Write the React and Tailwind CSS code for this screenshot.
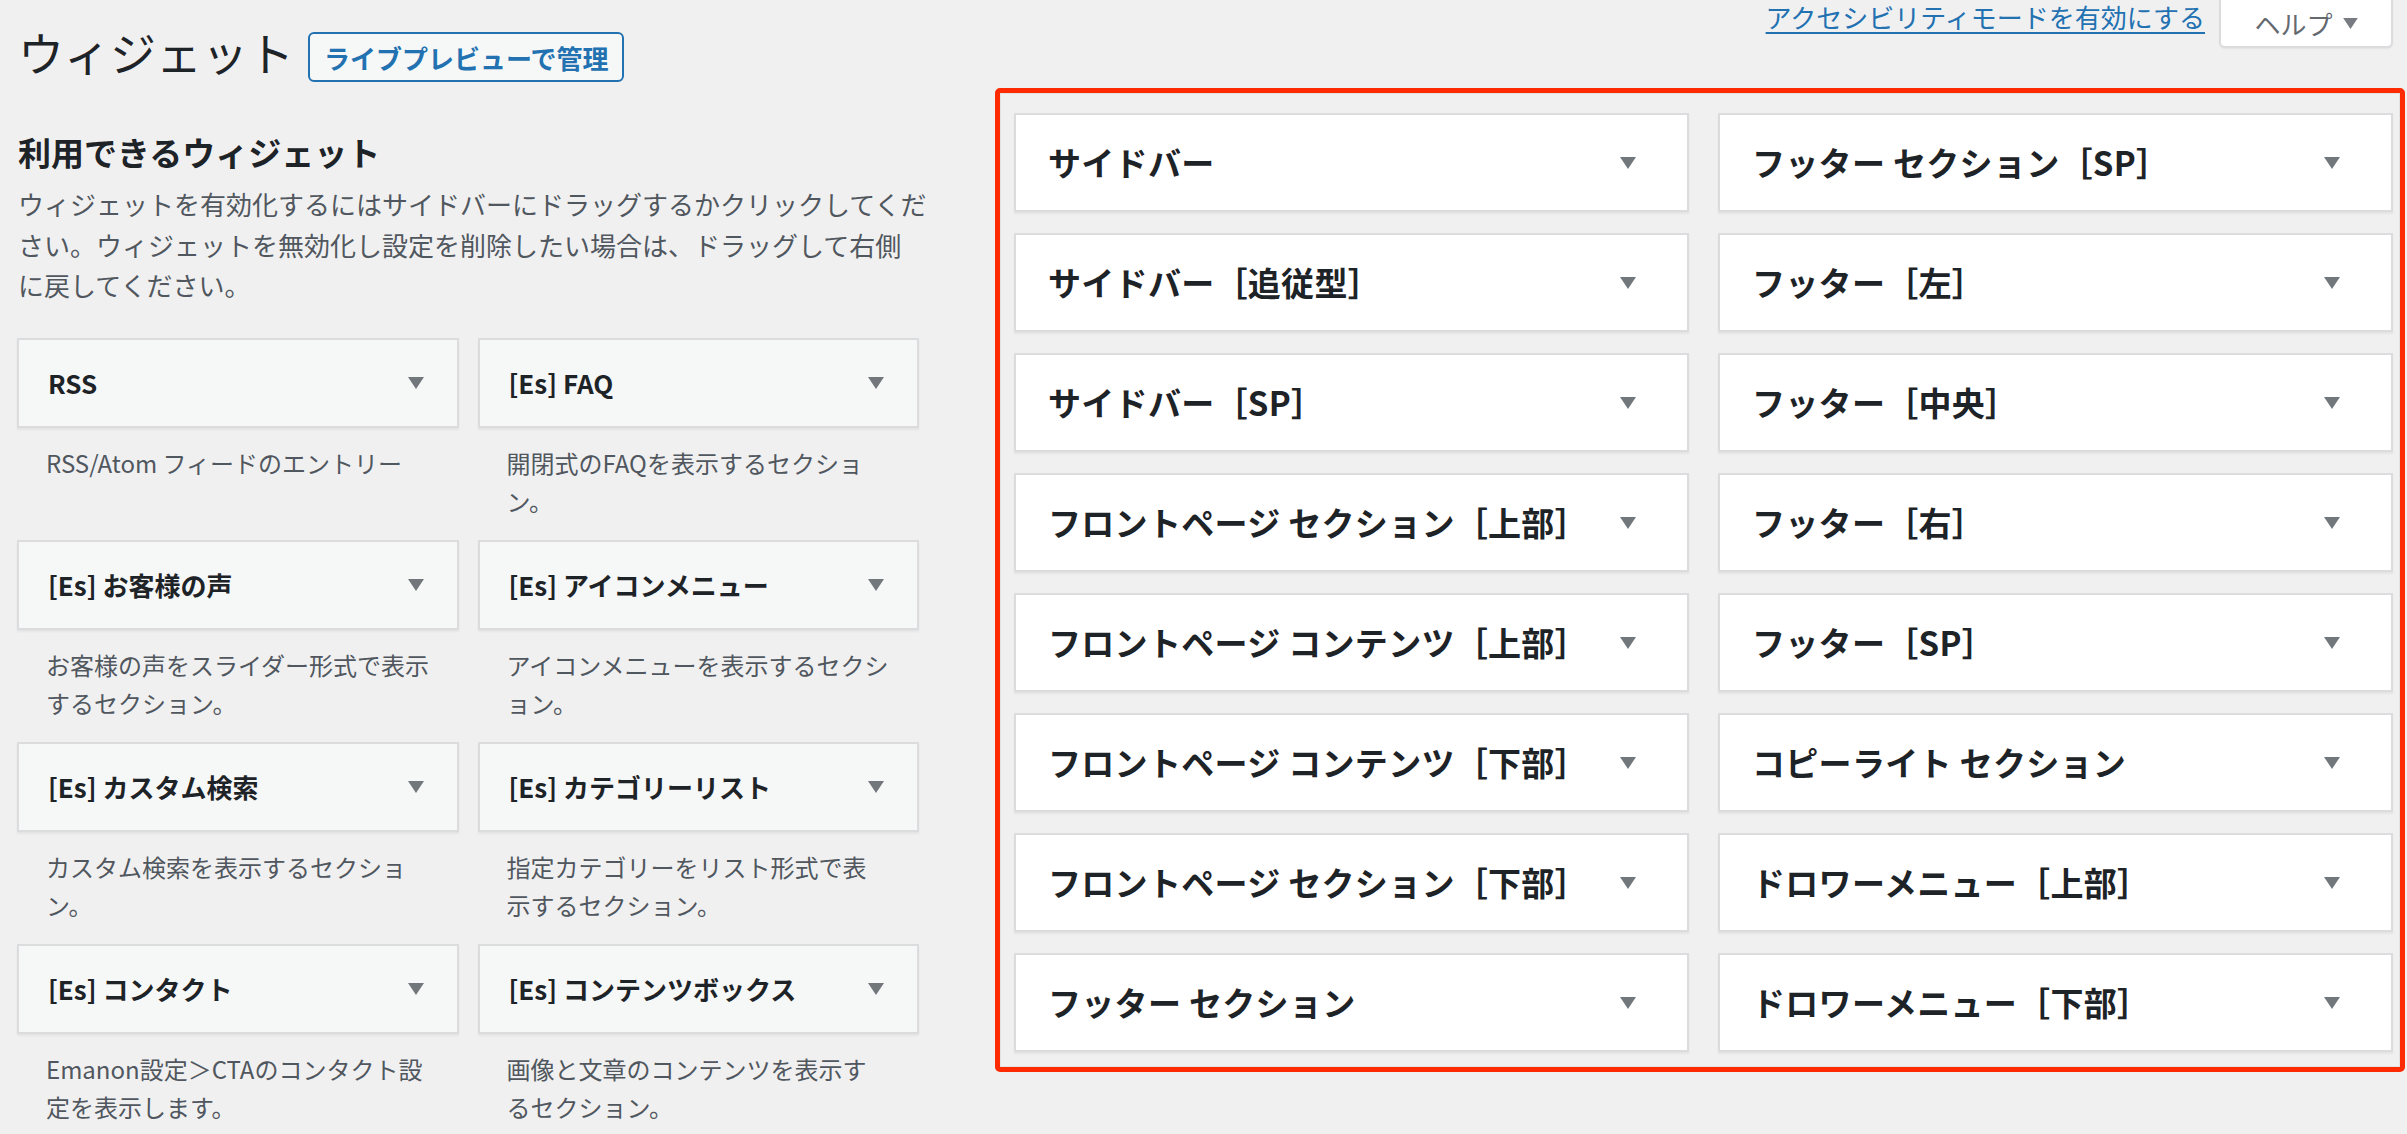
import React from 'react';

const availableWidgets = [
  { title: 'RSS', desc: ['RSS/Atom フィードのエントリー'] },
  { title: '[Es] FAQ', desc: ['開閉式のFAQを表示するセクショ', 'ン。'] },
  { title: '[Es] お客様の声', desc: ['お客様の声をスライダー形式で表示', 'するセクション。'] },
  { title: '[Es] アイコンメニュー', desc: ['アイコンメニューを表示するセクシ', 'ョン。'] },
  { title: '[Es] カスタム検索', desc: ['カスタム検索を表示するセクショ', 'ン。'] },
  { title: '[Es] カテゴリーリスト', desc: ['指定カテゴリーをリスト形式で表', '示するセクション。'] },
  { title: '[Es] コンタクト', desc: ['Emanon設定＞CTAのコンタクト設', '定を表示します。'] },
  { title: '[Es] コンテンツボックス', desc: ['画像と文章のコンテンツを表示す', 'るセクション。'] },
];

const sidebars = [
  'サイドバー',
  'フッター セクション［SP］',
  'サイドバー［追従型］',
  'フッター［左］',
  'サイドバー［SP］',
  'フッター［中央］',
  'フロントページ セクション［上部］',
  'フッター［右］',
  'フロントページ コンテンツ［上部］',
  'フッター［SP］',
  'フロントページ コンテンツ［下部］',
  'コピーライト セクション',
  'フロントページ セクション［下部］',
  'ドロワーメニュー［上部］',
  'フッター セクション',
  'ドロワーメニュー［下部］',
];

function Caret({ className }) {
  return (
    <svg viewBox="0 0 16 12" className={className} aria-hidden="true">
      <path d="M0 0h16L8 12z" fill="currentColor" />
    </svg>
  );
}

function WidgetItem({ title, desc }) {
  return (
    <div>
      <div className="flex h-[90px] items-center justify-between border-2 border-[#dcdcde] bg-[#f6f7f7] pl-[29px] pr-[33px] shadow-[0_2px_2px_rgba(0,0,0,0.05)]">
        <span className="text-[26px] font-bold text-[#1d2327]">{title}</span>
        <Caret className="h-[12px] w-[16px] text-[#72777c]" />
      </div>
      <p className="whitespace-nowrap pb-[20px] pl-[29px] pt-[16px] text-[24px] leading-[38px] text-[#50575e]">
        {desc.map((line, i) => (
          <React.Fragment key={i}>
            {i > 0 && <br />}
            {line}
          </React.Fragment>
        ))}
      </p>
    </div>
  );
}

function SidebarBox({ name }) {
  return (
    <div className="flex h-[99px] items-center justify-between border-2 border-[#dcdcde] bg-white pl-[32px] pr-[51px] shadow-[0_2px_2px_rgba(0,0,0,0.05)]">
      <span className="whitespace-nowrap text-[33px] font-bold tracking-[0.3px] text-[#1d2327]">{name}</span>
      <Caret className="h-[12px] w-[16px] text-[#72777c]" />
    </div>
  );
}

export default function App() {
  return (
    <div className="flex h-[1134px] w-full overflow-hidden bg-[#f0f0f1] pl-[17px] font-['Noto_Sans_CJK_JP','Noto_Sans',sans-serif] text-[#1d2327]">
      {/* left: available widgets */}
      <div className="w-[902px] shrink-0">
        <div className="flex items-start">
          <h1 className="ml-[1px] mt-[28px] text-[46px] font-normal leading-[46px] text-[#1d2327]">ウィジェット</h1>
          <button className="ml-[14px] mt-[32px] flex h-[50px] items-center rounded-[6px] border-2 border-[#2271b1] bg-[#f6f7f7] px-[14px] text-[26px] font-semibold text-[#2271b1]">
            ライブプレビューで管理
          </button>
        </div>

        <h2 className="ml-[1px] mt-[50px] text-[33px] font-bold leading-[40px]">利用できるウィジェット</h2>
        <p className="ml-[1px] mt-[12px] whitespace-nowrap text-[26px] leading-[40.5px] text-[#50575e]">
          ウィジェットを有効化するにはサイドバーにドラッグするかクリックしてくだ
          <br />
          さい。ウィジェットを無効化し設定を削除したい場合は、ドラッグして右側
          <br />
          に戻してください。
        </p>

        <div className="mt-[32px] grid grid-cols-2 gap-x-[19px]">
          {availableWidgets.map((w) => (
            <WidgetItem key={w.title} title={w.title} desc={w.desc} />
          ))}
        </div>
      </div>

      {/* right: registered sidebars */}
      <div className="ml-[76px] w-[1410px] shrink-0">
        <div className="flex h-[48px] items-start justify-end pr-[12px]">
          <a href="#" className="text-[26px] leading-[34px] text-[#2271b1] underline decoration-2 underline-offset-[4px]">
            アクセシビリティモードを有効にする
          </a>
          <div className="ml-[14px] flex h-[48px] w-[174px] items-center justify-center gap-[10px] rounded-b-[6px] border-2 border-t-0 border-[#dcdcde] bg-white text-[26px] text-[#646970] shadow-[0_1px_2px_rgba(0,0,0,0.06)]">
            <span>ヘルプ</span>
            <Caret className="h-[11px] w-[15px] text-[#787c82]" />
          </div>
        </div>

        <div className="mt-[40px] rounded-[5px] border-[5px] border-[#fe2a02]">
          <div className="border border-[#e2e2e4] pb-[14px] pl-[13px] pr-[6px] pt-[19px]">
            <div className="grid grid-cols-2 gap-x-[29px] gap-y-[21px]">
              {sidebars.map((name) => (
                <SidebarBox key={name} name={name} />
              ))}
            </div>
          </div>
        </div>
      </div>
    </div>
  );
}
